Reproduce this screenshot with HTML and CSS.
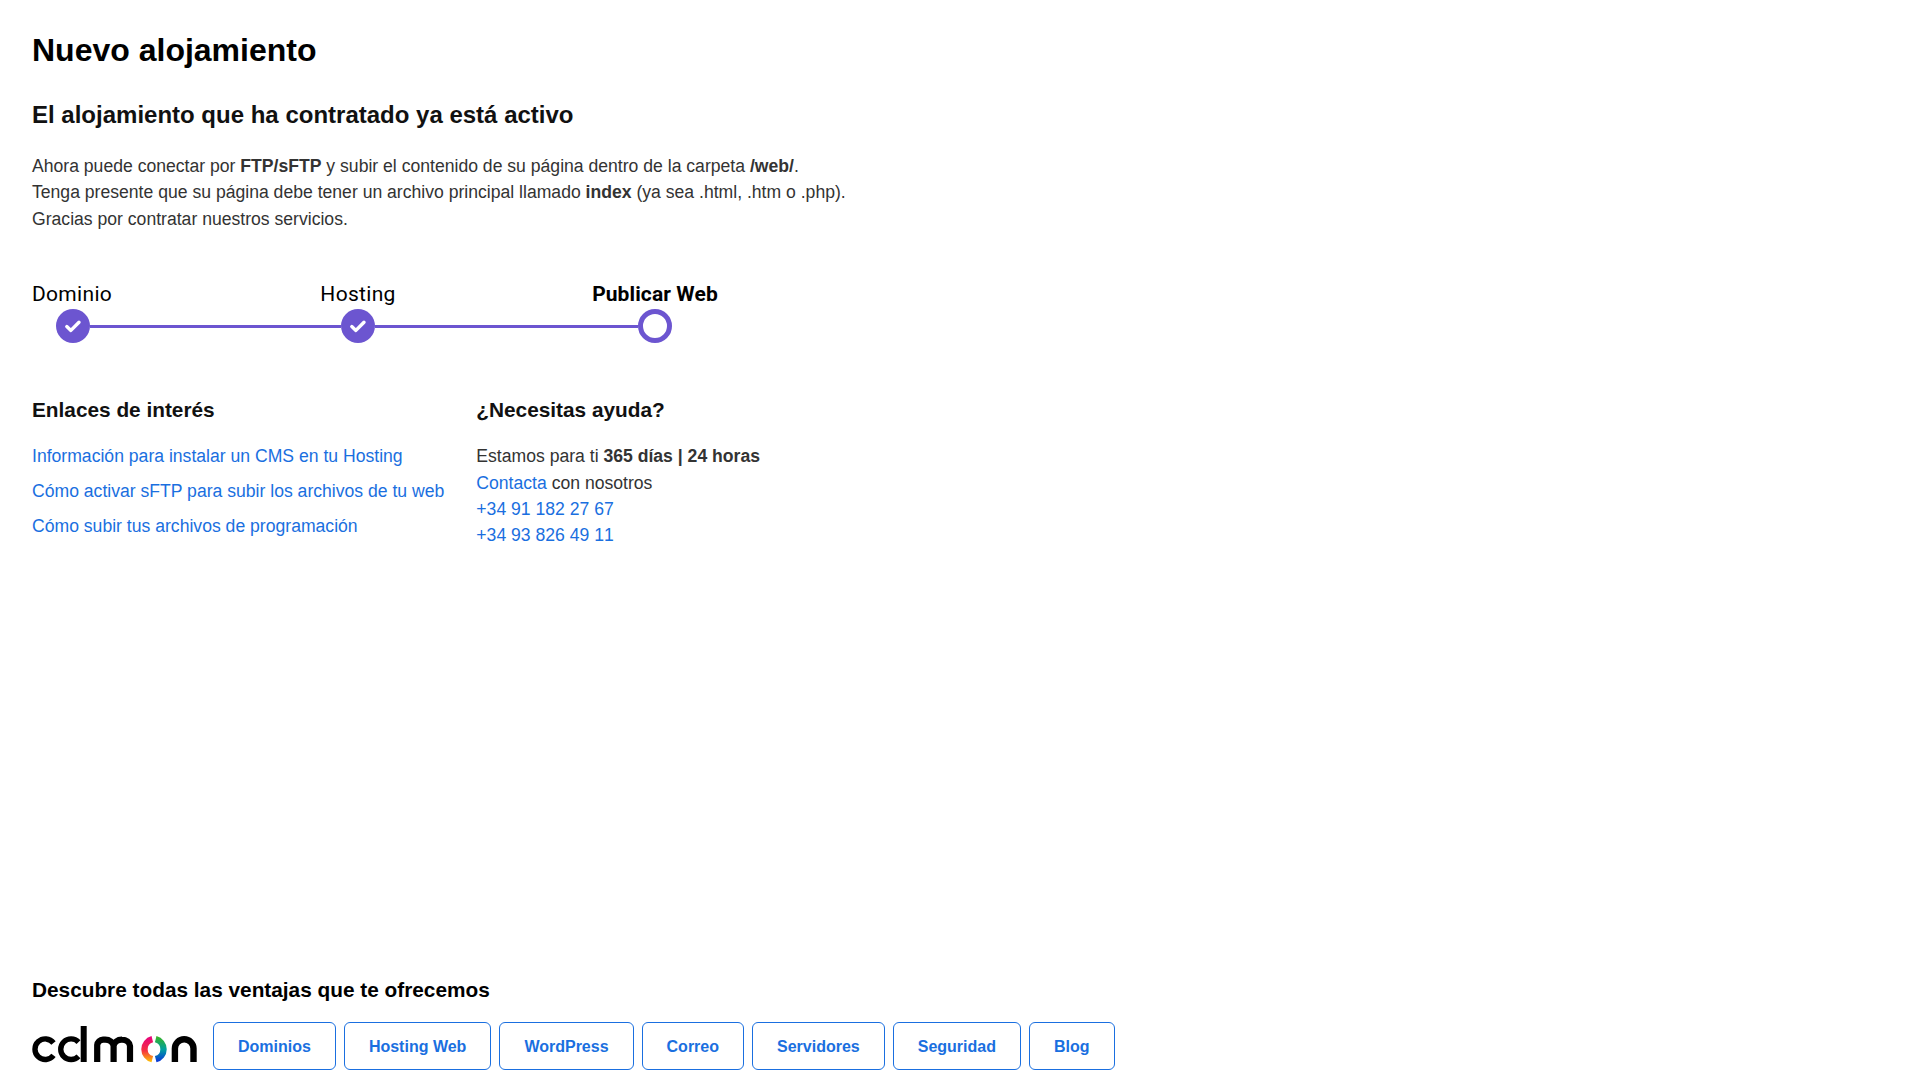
FILE: index.html
```html
<!DOCTYPE html>
<html lang="es">
<head>
<meta charset="utf-8">
<title>Nuevo alojamiento</title>
<link rel="stylesheet" href="styles.css">
</head>
<body>
<main class="page">
  <h1 class="title">Nuevo alojamiento</h1>
  <h2 class="subtitle">El alojamiento que ha contratado ya está activo</h2>
  <p class="intro">Ahora puede conectar por <b>FTP/sFTP</b> y subir el contenido de su página dentro de la carpeta <b>/web/</b>.<br>Tenga presente que su página debe tener un archivo principal llamado <b>index</b> (ya sea .html, .htm o .php).<br>Gracias por contratar nuestros servicios.</p>

  <section class="steps">
    <div class="step-labels">
      <span class="step-label step-label-a">Dominio</span>
      <span class="step-label step-label-b">Hosting</span>
      <span class="step-label step-label-c">Publicar Web</span>
    </div>
    <div class="track">
      <span class="dot"><svg width="18" height="18" viewBox="0 0 18 18"><path d="M2.8 9.6 L6.9 13.4 L15 5.2" fill="none" stroke="#fff" stroke-width="3.4" stroke-linecap="round" stroke-linejoin="round"/></svg></span>
      <span class="bar bar-a"></span>
      <span class="dot"><svg width="18" height="18" viewBox="0 0 18 18"><path d="M2.8 9.6 L6.9 13.4 L15 5.2" fill="none" stroke="#fff" stroke-width="3.4" stroke-linecap="round" stroke-linejoin="round"/></svg></span>
      <span class="bar bar-b"></span>
      <span class="dot dot-open"></span>
    </div>
  </section>

  <section class="columns">
    <div class="col">
      <h3 class="col-title">Enlaces de interés</h3>
      <ul class="links">
        <li><a href="#">Información para instalar un CMS en tu Hosting</a></li>
        <li><a href="#">Cómo activar sFTP para subir los archivos de tu web</a></li>
        <li><a href="#">Cómo subir tus archivos de programación</a></li>
      </ul>
    </div>
    <div class="col">
      <h3 class="col-title">¿Necesitas ayuda?</h3>
      <p class="help">Estamos para ti <b>365 días | 24 horas</b><br><a href="#">Contacta</a> con nosotros<br><a class="phone" href="#">+34 91 182 27 67</a><br><a class="phone" href="#">+34 93 826 49 11</a></p>
    </div>
  </section>

  <footer class="foot">
    <h3 class="foot-title">Descubre todas las ventajas que te ofrecemos</h3>
    <div class="foot-row">
      <svg class="logo" width="165" height="38" viewBox="0 0 165 38" aria-label="cdmon">
        <defs>
          <linearGradient id="warm" gradientUnits="userSpaceOnUse" x1="118" y1="10" x2="118" y2="37"><stop offset="0" stop-color="#e6007e"/><stop offset="0.55" stop-color="#f5333f"/><stop offset="1" stop-color="#ffd200"/></linearGradient>
          <linearGradient id="cool" gradientUnits="userSpaceOnUse" x1="126" y1="10" x2="126" y2="37"><stop offset="0" stop-color="#3cb521"/><stop offset="0.5" stop-color="#00a0a0"/><stop offset="1" stop-color="#0a28e0"/></linearGradient>
        </defs>
        <g fill="none" stroke="#000">
          <path stroke-width="5.4" d="M21.5 17 A10.3 10.3 0 1 0 21.5 29.4"/>
          <path stroke-width="5.4" d="M46.5 16.1 A10.3 10.3 0 1 0 46.5 30.3"/>
          <path stroke-width="6" d="M51.7 0 V36"/>
          <path stroke-width="6.2" d="M65.2 36 V19 A6 6 0 0 1 71 13.6 H73 A8.4 7 0 0 1 81.6 20 V36 M81.6 20 A8.2 7 0 0 1 90 13.6 A8 7 0 0 1 98 20 V36"/>
          <path stroke-width="6.4" d="M142.9 36 V22.5 A9.3 9.3 0 0 1 161.5 22.5 V36"/>
        </g>
        <path d="M120.3 13.2 A10.3 10.3 0 0 0 120.3 33.2" fill="none" stroke="url(#warm)" stroke-width="6.4"/>
        <path d="M123.7 13.2 A10.3 10.3 0 0 1 123.7 33.2" fill="none" stroke="url(#cool)" stroke-width="6.4"/>
      </svg>
      <nav class="buttons">
        <a class="btn" href="#">Dominios</a>
        <a class="btn" href="#">Hosting Web</a>
        <a class="btn" href="#">WordPress</a>
        <a class="btn" href="#">Correo</a>
        <a class="btn" href="#">Servidores</a>
        <a class="btn" href="#">Seguridad</a>
        <a class="btn" href="#">Blog</a>
      </nav>
    </div>
  </footer>
</main>
</body>
</html>
```
FILE: styles.css
```css
* { box-sizing: border-box; }
html, body { margin: 0; padding: 0; }
body {
  font-family: "Liberation Sans", Arial, sans-serif;
  color: #333;
  background: #fff;
}
.page {
  min-height: 1080px;
  padding: 32px 32px 10px;
  display: flex;
  flex-direction: column;
}
a { color: #1a6fe0; text-decoration: none; }
.phone { font-kerning: none; }
.title {
  margin: 0;
  font-size: 32px;
  line-height: 36px;
  color: #000;
}
.subtitle {
  margin: 33px 0 0;
  font-size: 24px;
  line-height: 28px;
  color: #111;
}
.intro {
  margin: 24px 0 0;
  font-size: 17.6px;
  line-height: 26.4px;
}
.steps { margin-top: 48px; }
.step-labels { display: flex; height: 28px; }
.step-label {
  font-family: Roboto, sans-serif;
  font-size: 21px;
  line-height: 28px;
  letter-spacing: 0.3px;
  color: #000;
  text-align: center;
  white-space: nowrap;
}
.step-label-a { width: 78px; }
.step-label-b { width: 82px; margin-left: 207px; }
.step-label-c { width: 126px; margin-left: 193px; font-weight: 700; letter-spacing: 0.1px; }
.track { display: flex; align-items: center; margin-left: 24px; margin-top: 1px; }
.dot {
  width: 34px;
  height: 34px;
  border-radius: 50%;
  background: #6c55d0;
  display: flex;
  align-items: center;
  justify-content: center;
  flex: none;
}
.dot-open { background: #fff; border: 5px solid #6c55d0; }
.bar { height: 3px; background: #6c55d0; flex: none; }
.bar-a { width: 251px; }
.bar-b { width: 263px; }
.columns { display: flex; gap: 32px; margin-top: 54px; }
.col-title {
  margin: 0;
  font-size: 20.8px;
  line-height: 26px;
  color: #111;
}
.links { list-style: none; margin: 20px 0 0; padding: 0; font-size: 17.6px; }
.links li { line-height: 26.4px; margin-bottom: 8.6px; }
.help { margin: 20px 0 0; font-size: 17.6px; line-height: 26.4px; }
.foot { margin-top: auto; }
.foot-title {
  margin: 0;
  font-size: 20.8px;
  line-height: 26px;
  color: #000;
}
.foot-row { display: flex; align-items: center; gap: 16px; margin-top: 19px; }
.logo { flex: none; margin-bottom: 2px; }
.buttons { display: flex; gap: 8px; }
.btn {
  display: flex;
  align-items: center;
  height: 48px;
  padding: 1px 24px 0;
  border: 1px solid #1a6fe0;
  border-radius: 6px;
  font-size: 16px;
  font-weight: 700;
}
```
